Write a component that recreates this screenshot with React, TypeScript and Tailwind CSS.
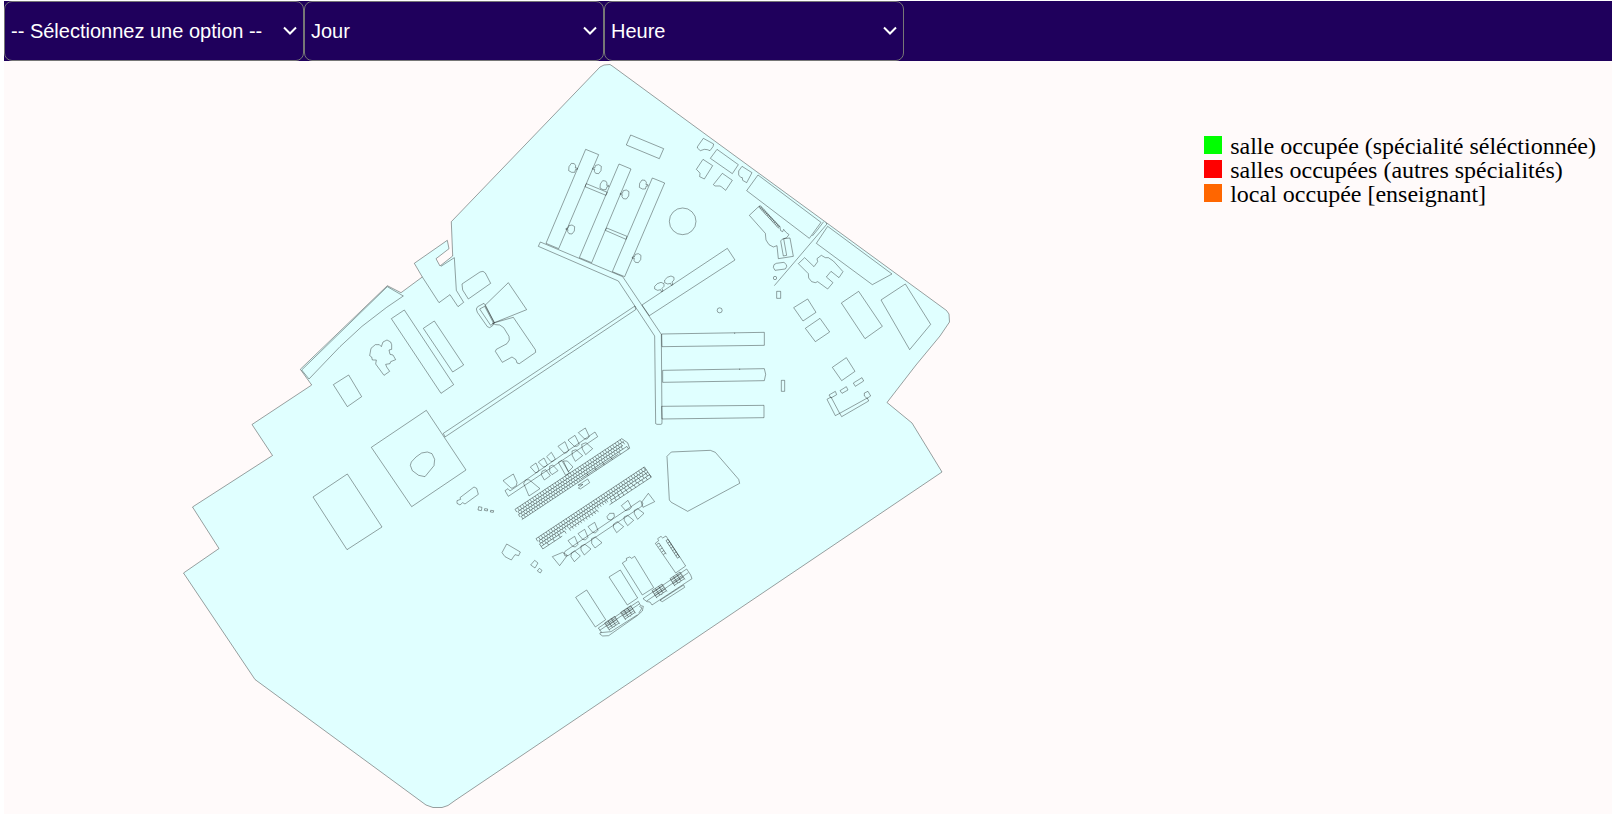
import React from 'react';

type Sheet = { at: [number, number]; polygons?: string[]; lines?: string[]; circles?: [number, number, number][] };

const GROUND =
  'M600 67 L604 65 L610 64.5 L613 66.5 L686 120 L946.5 310.5 L949 314 L949.5 322 L940 336 L916 365 L887 402.500 L912 423 L942 472 L455 800.500 L448 805.500 L442 807.500 L433 807.500 L426 805 L255 679.500 L183.500 573 L219 548.500 L192.500 507 L272.500 455.500 L252 424.500 L311.700 385 L300.300 369.300 L387.300 285.700 L401 292.700 L422.300 277 L414.300 263.300 L447.300 240.300 L449 248.700 L436 258.700 L440 266 L452.700 256 L451.300 221.700 Z';

// Each sheet is drawn at three units to one map unit, from its own origin.
const SHEETS: Sheet[] = [
  {
    at: [520, 110],
    polygons: [
      '197,118 236,134 116,416 78,400',
      '297,162 333,177 215,458 178,443',
      '397,204 434,219 314,500 277,485',
      '61,396 55,409 295,513 404,678 407,941 411,943 423,943 426,941 424,673 308,500',
      '199,221 262,247 258,256 195,230',
      '260,354 321,379 318,388 256,361',
      '332,75 431,116 418,146 319,105',
      '550,85 581,102 579,110 570,122 562,119 553,118 541,122 532,114 533,109',
      '591,118 655,164 637,191 571,145',
      '549,148 578,167 553,207 539,200 540,190 537,186 529,178',
      '607,190 637,211 617,241 605,231 600,228 585,228 580,224',
      '666,169 696,188 680,218 668,211 667,203 662,202 656,195 656,183',
      '622,415 645,450 388,617 366,585',
    ],
    circles: [[488, 334, 40]],
  },
  {
    at: [680, 120],
    polygons: [
      '234,165 423,307 388,355 200,212',
      '208,286 238,258 300,322 302,332 308,335 311,328 317,336 327,344 320,353 306,358 302,363 310,408 320,406 311,356 330,354 340,409 295,416 291,377 280,381 267,374 258,360 256,340',
      '443,319 636,462 577,494 409,370',
      '282,434 289,430 312,427 319,434 320,440 316,447 285,451 280,442',
      '290,514 302,514 302,535 290,535',
      '355,431 374,413 402,440 413,425 411,416 424,406 436,413 445,413 460,423 489,455 477,473 453,454 439,471 459,488 443,507 413,485 406,488 395,485 386,474 385,461',
      '383,537 408,577 369,603 341,563',
      '420,595 449,636 406,665 376,625',
      '536,514 607,619 555,656 484,549',
      '676,492 752,613 689,689 603,540',
    ],
    lines: ['437,308 441,312 283,497', '431,305 412,330 397,348'],
    circles: [[285, 474, 5], [119, 571, 7.5]],
  },
  {
    at: [290, 220],
    polygons: [
      '35,450 292,200 340,228 290,262 216,319 150,380 57,477',
      '304,296 343,270 491,494 453,520',
      '400,325 433,303 521,435 488,456',
      '130,494 176,465 215,530 172,560',
      '516,192 570,156 579,154 586,159 602,190 535,237 518,210',
      '655,188 710,269 613,308 585,256',
      '559,267 563,260 582,250 587,257 613,308 608,317 599,323 592,320 562,277',
      '569,267 584,259 611,310 602,316',
      '607,310 670,292 736,389 737,397 688,431 681,429 678,419 666,411 637,427 616,394 619,388 651,371 658,360 657,349 641,323 629,315 617,314',
      '239,407 243,385 256,374 268,374 274,380 279,366 291,360 302,366 305,374 305,388 297,390 300,403 309,405 317,419 302,425 300,431 287,433 290,441 299,454 282,466 257,432 259,420 247,420 245,411',
      '1035,258 1037,269 465,651 460,640',
    ],
    lines: ['397,171 447,248 480,224 504,260 521,247 499,211 493,113 453,139'],
  },
  {
    at: [640, 300],
    polygons: [
      '65,102 373,97 373,136 66,140',
      '68,211 373,206 377,223 373,242 68,247',
      '65,319 372,316 372,353 66,357',
      '424,241 434,241 434,274 424,274',
      '81,469 94,456 211,451 226,457 296,538 299,550 143,634 94,607 88,600',
      '619,173 645,214 605,242 577,202',
      '640,249 666,233 671,243 646,259',
      '600,272 619,260 624,270 606,280',
      '567,285 586,274 590,284 573,294',
      '561,298 573,291 599,340 586,347',
      '599,340 682,294 686,303 605,350',
      '673,279 684,274 692,288 681,295 673,288',
    ],
    lines: ['284,98 284,102', '299,206 299,210'],
  },
  {
    at: [300, 390],
    polygons: [
      '379,61 498,240 335,350 214,172',
      '142,252 246,411 141,479 39,321',
      '334,216 348,201 365,189 382,186 396,191 404,208 402,227 375,260 356,256 337,242 331,226',
      '480,323 522,291 530,295 535,313 495,342 488,338 480,345 471,340 471,332 482,328',
      '536,350 546,352 544,362 534,360',
      '554,356 563,357 562,363 553,361',
      '572,361 581,362 580,367 571,366',
      '620,462 661,486 656,497 645,494 634,510 615,500 606,488',
      '704,511 714,519 705,534 692,525',
      '718,535 726,541 721,549 712,543',
    ],
  },
  {
    at: [450, 410],
    polygons: [
      '165,242 174,236 180,243 435,66 443,80 175,259',
      '159,212 190,192 201,217 199,227 186,235 182,233',
      '221,220 227,210 237,209 270,236 237,258',
      '241,171 258,159 267,180 262,187 256,188',
      '265,156 282,144 292,164 286,170 280,171',
      '290,140 304,127 316,147 311,152 303,155',
      '324,109 345,95 356,121 349,129 342,129',
      '354,90 375,76 388,103 381,109 373,109',
      '385,68 406,54 418,80 411,87 404,87',
      '276,184 287,179 301,197 283,210 274,194',
      '299,169 308,165 324,182 306,194 299,184',
      '366,123 378,119 398,137 376,154 367,137',
      '395,103 408,98 428,116 407,134 397,117',
      '325,157 335,151 358,189 347,196',
      '340,153 352,153 369,171 355,185',
      '384,226 413,207 419,218 391,237 385,234 399,223',
      '307,440 338,427 352,436 329,467',
      '342,430 345,424 570,272 579,279 575,289 354,437 345,438',
      '574,278 595,250 614,275 579,292',
      '514,287 534,271 544,292 539,298 527,302',
      '471,320 479,310 492,310 493,320 484,330 474,328',
      '354,392 374,379 384,403 376,411 368,409',
      '384,371 404,358 414,382 406,390 398,388',
      '414,350 434,337 444,361 436,369 428,367',
      '364,429 374,423 391,438 373,455 363,440',
      '393,408 405,403 423,417 403,435 393,420',
      '425,386 436,381 456,398 435,414 425,400',
      '491,342 502,335 521,350 500,368 490,352',
      '522,321 533,316 551,331 533,347 523,332',
      '553,301 563,296 582,310 563,328 553,311',
    ],
  },
  {
    at: [560, 520],
    polygons: [
      '47,232 80,210 137,299 106,321',
      '147,171 181,150 233,234 202,255',
      '187,129 200,121 199,115 209,111 215,115 224,109 281,203 247,225',
      '286,70 296,62 293,56 303,49 308,54 318,48 377,138 347,159',
      '249,236 380,147 392,165 396,176 276,255 270,246 261,245',
      '300,241 371,195 374,202 307,245',
      '115,324 235,244 242,257 250,259 247,273 233,286 146,347 128,348 119,342 124,336',
    ],
    lines: ['119,331 238,252', '260,243 385,158', '238,259 246,264 236,280', '121,338 153,335 233,284'],
  },
];

const LEFT_ALCOVE = '14,4 9,4 6,13 -3,13 -12,8 -11,-4 -4,-14 5,-13 9,-7 8,0 14,0';
const RIGHT_ALCOVE = '-14,-4 -8,-4 -5,-12 4,-14 12,-9 11,4 4,13 -5,12 -9,6 -8,0 -14,0';
const LOWER_ALCOVE = '6,15 4,9 -5,11 -14,7 -14,-1 -6,-9 5,-13 14,-9 14,-1 8,5 11,13';

const ALCOVES: [string, number, number][] = [
  [LEFT_ALCOVE, 158, 174],
  [LEFT_ALCOVE, 252, 226],
  [LEFT_ALCOVE, 370, 224],
  [RIGHT_ALCOVE, 232, 178],
  [RIGHT_ALCOVE, 315, 254],
  [RIGHT_ALCOVE, 152, 359],
  [RIGHT_ALCOVE, 351, 445],
  [LOWER_ALCOVE, 418, 530],
  [LOWER_ALCOVE, 448, 511],
];

type Row = [top: number, bottom: number, step: number, from: number, to: number];

function rooms(rows: Row[]): string {
  let d = '';
  for (const [top, bottom, step, from, to] of rows) {
    d += `M${from} ${top}H${to}`;
    for (let x = from; x <= to; x += step) d += `M${x} ${top}V${bottom}`;
  }
  return d;
}

const NORTH_BLOCK = rooms([
  [0, 10, 9, 0, 384],
  [10, 19, 9, 4, 384],
  [19, 28, 9, 0, 376],
  [28, 37, 9, 4, 210],
  [28, 37, 29, 210, 384],
  [33, 33, 30, 214, 350],
]);

const SOUTH_BLOCK = rooms([
  [0, 10, 9, 0, 390],
  [10, 19, 9, 4, 390],
  [19, 28, 9, 0, 240],
  [19, 28, 13, 240, 390],
  [28, 37, 21, 0, 84],
  [30, 37, 10, 100, 200],
  [28, 37, 14, 250, 390],
]);

const CLASS_BLOCK = rooms([
  [0, 6, 12, 0, 36],
  [6, 12, 12, 0, 36],
  [12, 18, 12, 0, 36],
  [18, 24, 12, 0, 36],
  [24, 27, 18, 0, 36],
]);

const DESKS = rooms([[0, 6, 6, 0, 88]]) + 'M0 6H88';
const LOCKERS = rooms([[0, 7, 9, 0, 64]]) + 'M0 7H63';
const SHORT_LOCKERS = rooms([[0, 8, 9, 0, 40]]);

const SHEET_450 = 'translate(450 410) scale(.33333)';
const SHEET_560 = 'translate(560 520) scale(.33333)';

const FITTINGS: { place: string; d: string }[] = [
  { place: `${SHEET_450} translate(195 298) rotate(-33.5)`, d: NORTH_BLOCK + 'M0 37H388M384 0L392 20L388 37' },
  { place: `${SHEET_450} translate(258 386) rotate(-33.5)`, d: SOUTH_BLOCK + 'M0 37H70M240 37H390V0' },
  { place: `${SHEET_560} translate(134 309) rotate(-33.5)`, d: CLASS_BLOCK },
  { place: `${SHEET_560} translate(182 277) rotate(-33.5)`, d: CLASS_BLOCK },
  { place: `${SHEET_560} translate(276 212) rotate(-33.5)`, d: CLASS_BLOCK },
  { place: `${SHEET_560} translate(330 176) rotate(-33.5)`, d: CLASS_BLOCK },
  { place: `${SHEET_560} translate(324 58) rotate(57)`, d: LOCKERS },
  { place: `${SHEET_560} translate(297 69) rotate(57)`, d: SHORT_LOCKERS },
  { place: 'translate(680 120) scale(.33333) translate(241 257) rotate(47)', d: DESKS },
];

function CampusMap() {
  return (
    <svg
      role="img"
      aria-label="Plan du campus"
      viewBox="4 61 950 753"
      preserveAspectRatio="xMinYMin meet"
      className="h-[calc(100vh-61px)] min-w-0 flex-1"
      fill="none"
      stroke="#000"
      strokeOpacity={0.75}
      strokeWidth={0.5}
    >
      <path d={GROUND} fill="#e0ffff" />
      {SHEETS.map((sheet, i) => (
        <g key={i} transform={`translate(${sheet.at[0]} ${sheet.at[1]}) scale(.33333)`} strokeWidth={1.5}>
          {sheet.polygons?.map((points) => <polygon key={points} points={points} />)}
          {sheet.lines?.map((points) => <polyline key={points} points={points} />)}
          {sheet.circles?.map(([cx, cy, r]) => <circle key={`${cx}-${cy}`} cx={cx} cy={cy} r={r} />)}
        </g>
      ))}
      <g transform="translate(520 110) scale(.33333)" strokeWidth={1.5}>
        {ALCOVES.map(([points, x, y]) => (
          <polygon key={`${x}-${y}`} points={points} transform={`translate(${x} ${y})`} />
        ))}
      </g>
      {FITTINGS.map(({ place, d }) => (
        <path key={place} transform={place} d={d} strokeWidth={1.5} />
      ))}
    </svg>
  );
}

const FILTERS = [
  { id: 'specialite', label: 'Spécialité', first: '-- Sélectionnez une option --' },
  { id: 'jour', label: 'Jour', first: 'Jour' },
  { id: 'heure', label: 'Heure', first: 'Heure' },
];

function Filter({ id, label, first }: { id: string; label: string; first: string }) {
  return (
    <div className="relative w-75 min-w-0">
      <select
        id={id}
        aria-label={label}
        className="h-15 w-full appearance-none rounded-lg border border-[#767676] bg-[#1f005c] pr-6 pl-1.5 font-['Liberation_Sans',Arial,sans-serif] text-[20px] text-white"
      >
        <option>{first}</option>
      </select>
      <svg
        aria-hidden="true"
        viewBox="0 0 14 10"
        className="pointer-events-none absolute top-1/2 right-[7px] h-2.5 w-3.5 -translate-y-1/2"
        fill="none"
        stroke="#fff"
        strokeWidth={2}
      >
        <path d="M1 1.500L7 7.500L13 1.500" />
      </svg>
    </div>
  );
}

const LEGEND = [
  { swatch: 'bg-[#00ff00]', text: 'salle occupée (spécialité séléctionnée)' },
  { swatch: 'bg-[#ff0000]', text: 'salles occupées (autres spécialités)' },
  { swatch: 'bg-[#ff6600]', text: 'local occupée [enseignant]' },
];

export default function App() {
  return (
    <div className="min-h-screen bg-white pt-px pl-1">
      <header className="flex h-15 bg-[#1f005c]">
        {FILTERS.map((filter) => (
          <Filter key={filter.id} {...filter} />
        ))}
      </header>
      <main className="flex bg-[#fffafa]">
        <CampusMap />
        <ul className="mt-[73px] mr-4 shrink-0 font-['Liberation_Serif','Times_New_Roman',serif] text-[24px] leading-6 text-black">
          {LEGEND.map(({ swatch, text }) => (
            <li key={text} className="flex items-start gap-2">
              <span className={`mt-0.5 size-[18px] ${swatch}`} />
              {text}
            </li>
          ))}
        </ul>
      </main>
    </div>
  );
}
